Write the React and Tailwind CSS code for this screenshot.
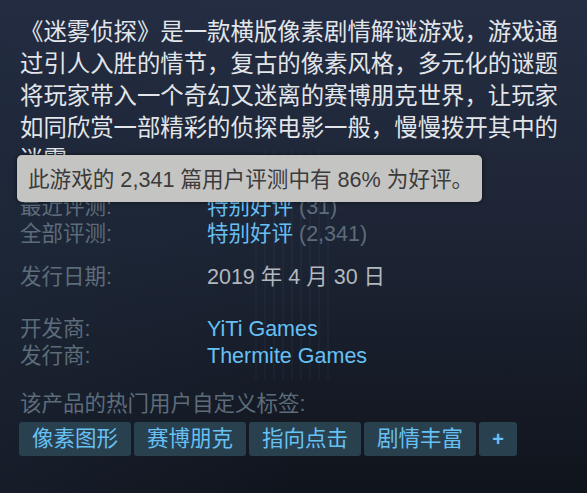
export default function App() {
  const lines = [
    "《迷雾侦探》是一款横版像素剧情解谜游戏，游戏通",
    "过引人入胜的情节，复古的像素风格，多元化的谜题",
    "将玩家带入一个奇幻又迷离的赛博朋克世界，让玩家",
    "如同欣赏一部精彩的侦探电影一般，慢慢拨开其中的",
    "迷雾。",
  ];
  const tags = ["像素图形", "赛博朋克", "指向点击", "剧情丰富"];
  return (
    <div className="relative w-[587px] h-[493px] overflow-hidden bg-gradient-to-b from-[#252d43] via-[#1c2434] to-[#10141c] font-['Liberation_Sans','Noto_Sans_CJK_SC',sans-serif]">
      <div className="pointer-events-none absolute inset-0 bg-gradient-to-r from-[#1f2a3c]/40 via-transparent to-transparent" />
      <div className="pointer-events-none absolute top-[150px] left-[255px] w-[80px] h-[230px] bg-[repeating-linear-gradient(90deg,rgba(120,140,170,0.05)_0px,rgba(120,140,170,0.05)_2px,transparent_2px,transparent_9px)]" />
      <div className="relative">
        <div className="pl-5 pt-4 text-[23.4px] leading-8 text-[#e2e6ea] whitespace-nowrap">
          {lines.map((l, i) => (
            <div key={i}>{l}</div>
          ))}
        </div>

        <div className="pl-5 mt-[18px] text-[21.5px] leading-[27px]">
          <div className="grid grid-cols-[187px_1fr]">
            <div className="text-[#5d6c7a]">最近评测:</div>
            <div>
              <span className="text-[#66c0f4]">特别好评</span>
              <span className="text-[#5d6c7a]"> (31)</span>
            </div>
            <div className="text-[#5d6c7a]">全部评测:</div>
            <div>
              <span className="text-[#66c0f4]">特别好评</span>
              <span className="text-[#5d6c7a]"> (2,341)</span>
            </div>
          </div>

          <div className="grid grid-cols-[187px_1fr] mt-4">
            <div className="text-[#5d6c7a]">发行日期:</div>
            <div className="text-[#b2b8be]">2019 年 4 月 30 日</div>
          </div>

          <div className="grid grid-cols-[187px_1fr] mt-[25px]">
            <div className="text-[#5d6c7a]">开发商:</div>
            <div className="text-[#66c0f4]">YiTi Games</div>
            <div className="text-[#5d6c7a]">发行商:</div>
            <div className="text-[#66c0f4]">Thermite Games</div>
          </div>

          <div className="mt-[21px] text-[#5d6c7a]">该产品的热门用户自定义标签:</div>
          <div className="mt-[4px] -ml-px flex gap-[3px]">
            {tags.map((t) => (
              <div
                key={t}
                className="h-[34px] px-[13px] rounded-[3px] bg-[#29404f] text-[#67c1f5] text-[21.5px] leading-[34px]"
              >
                {t}
              </div>
            ))}
            <div className="h-[34px] w-[38px] rounded-[3px] bg-[#29404f] text-[#67c1f5] text-[20px] font-bold leading-[34px] text-center">
              +
            </div>
          </div>
        </div>
      </div>

      <div className="absolute left-[17px] top-[155px] w-[465px] h-[47px] rounded-[5px] bg-[#c4c4c2] shadow-[0_0_4px_rgba(0,0,0,0.6)] pl-[11px] pt-[3px] flex items-center text-[21.6px] text-[#3b3b3b] whitespace-nowrap">
        此游戏的 2,341 篇用户评测中有 86% 为好评。
      </div>
    </div>
  );
}
